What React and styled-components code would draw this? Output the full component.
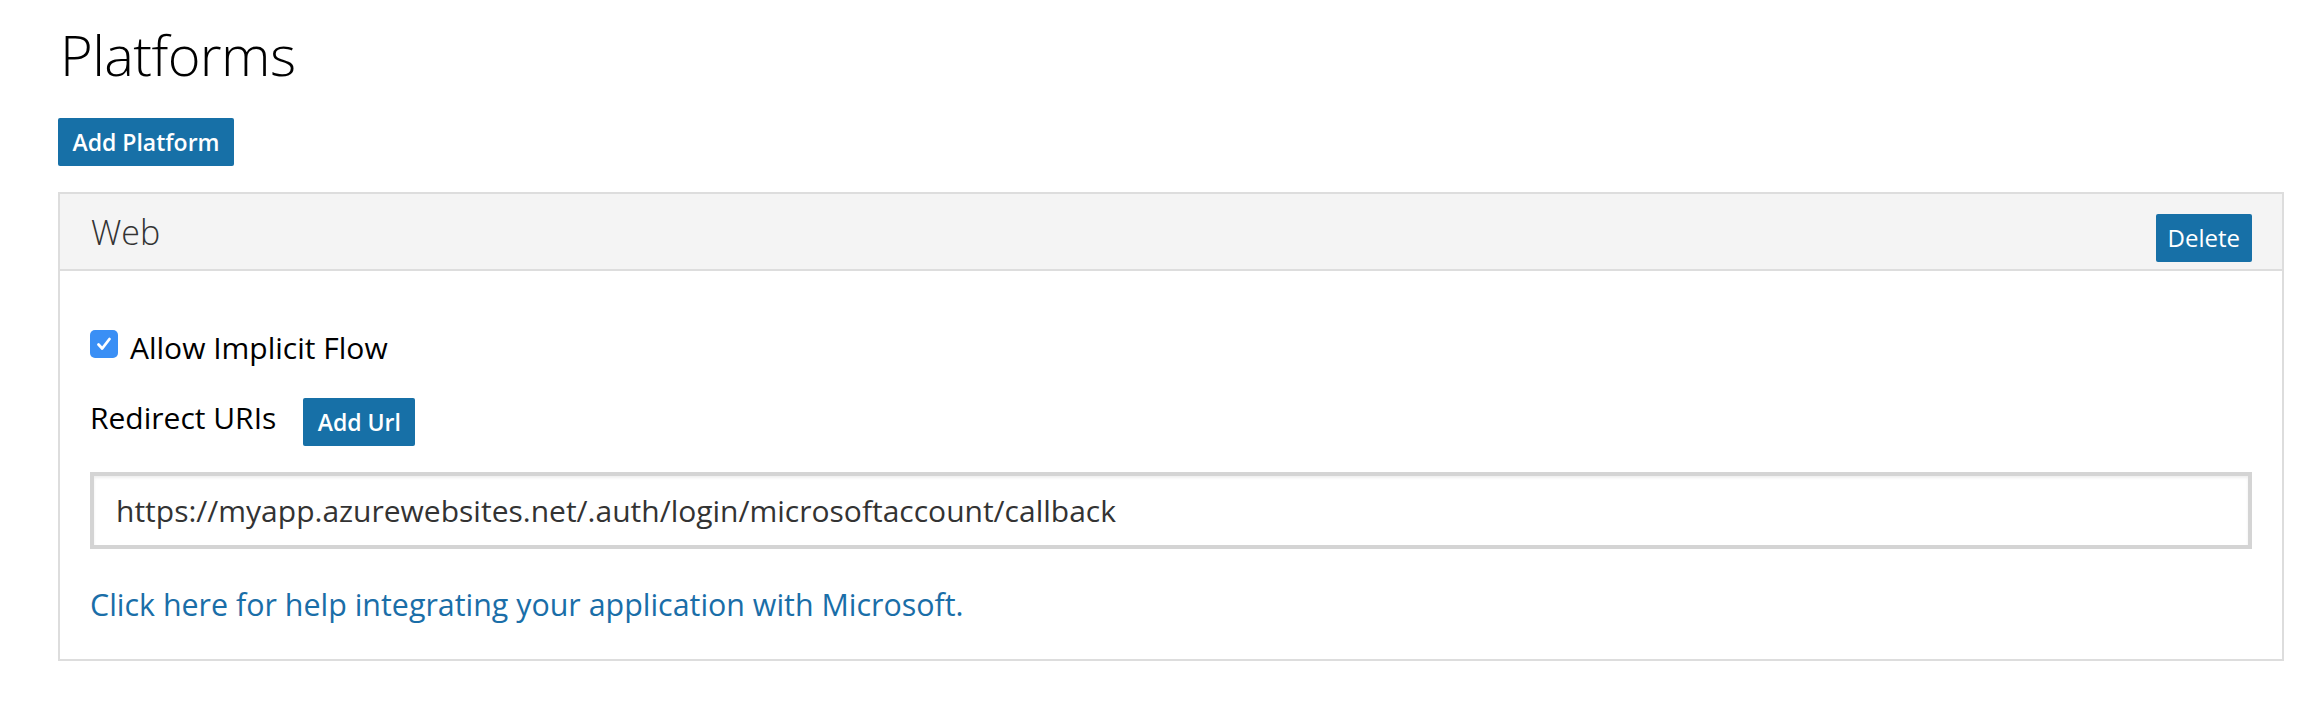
import React from "react";
import styled, { createGlobalStyle } from "styled-components";

const Global = createGlobalStyle`
  html, body { margin: 0; padding: 0; background: #fff; }
  body { font-family: "Open Sans", "Noto Sans", sans-serif; color: #000; }
  * { box-sizing: border-box; }
`;

const Page = styled.div`
  display: flex;
  flex-direction: column;
  align-items: flex-start;
  padding: 22px 36px 40px 58px;
`;

const Title = styled.h1`
  margin: 0 0 0 2px;
  font-size: 56px;
  line-height: 64px;
  font-weight: 300;
  color: #000;
  letter-spacing: -0.6px;
`;

const Button = styled.button`
  display: inline-flex;
  align-items: center;
  justify-content: center;
  height: 48px;
  min-width: ${(p) => p.$min || 0}px;
  padding: 0 12px;
  border: none;
  border-radius: 2px;
  background: #1770a7;
  color: #fff;
  font-family: "Open Sans", sans-serif;
  font-size: 23px;
  line-height: 48px;
  font-weight: ${(p) => (p.$regular ? 400 : 600)};
  white-space: nowrap;
  cursor: pointer;
  flex: none;
`;

const AddPlatform = styled(Button)`
  margin-top: 32px;
`;

const Card = styled.section`
  align-self: stretch;
  margin-top: 26px;
  border: 2px solid #dddddd;
  background: #fff;
`;

const CardHeader = styled.header`
  display: flex;
  justify-content: space-between;
  align-items: flex-start;
  height: 77px;
  padding: 0 30px 0 31px;
  background: #f4f4f4;
  border-bottom: 2px solid #dddddd;
`;

const CardTitle = styled.h2`
  margin: 0;
  font-size: 34px;
  line-height: 77px;
  font-weight: 300;
  color: #333;
`;

const DeleteButton = styled(Button)`
  margin-top: 20px;
  font-size: 24px;
`;

const CardBody = styled.div`
  display: flex;
  flex-direction: column;
  padding: 57px 30px 34px 30px;
`;

const Row = styled.div`
  display: flex;
  align-items: flex-start;
  gap: ${(p) => p.$gap || 12}px;
  margin-top: ${(p) => p.$top || 0}px;
`;

const Check = styled.span`
  display: inline-flex;
  align-items: center;
  justify-content: center;
  width: 28px;
  height: 28px;
  margin-top: 2px;
  border-radius: 5px;
  background: #3a8ff5;
  flex: none;
`;

const Label = styled.span`
  font-size: 30px;
  line-height: 40px;
  color: #000;
`;

const UrlInput = styled.input`
  margin-top: 26px;
  height: 77px;
  width: 100%;
  padding: 0 22px;
  border: 4px solid #d4d4d4;
  border-radius: 0;
  box-shadow: inset 0 2px 3px rgba(0, 0, 0, 0.07);
  font-family: "Open Sans", sans-serif;
  font-size: 30px;
  color: #333;
  outline: none;
  background: #fff;
`;

const HelpLink = styled.a`
  margin-top: 36px;
  font-size: 30.4px;
  line-height: 40px;
  color: #1a6ea8;
  text-decoration: none;
  align-self: flex-start;
`;

export default function App() {
  return (
    <>
      <Global />
      <Page>
        <Title>Platforms</Title>
        <AddPlatform $min={176}>Add Platform</AddPlatform>
        <Card>
          <CardHeader>
            <CardTitle>Web</CardTitle>
            <DeleteButton $regular $min={94}>Delete</DeleteButton>
          </CardHeader>
          <CardBody>
            <Row>
              <Check>
                <svg width="20" height="20" viewBox="0 0 20 20">
                  <path d="M4.5 10.5 L8.2 14.5 L15.5 5" fill="none" stroke="#fff" strokeWidth="2.8" strokeLinecap="round" strokeLinejoin="round" />
                </svg>
              </Check>
              <Label>Allow Implicit Flow</Label>
            </Row>
            <Row $top={30} $gap={27}>
              <Label>Redirect URIs</Label>
              <Button $min={112}>Add Url</Button>
            </Row>
            <UrlInput readOnly value="https://myapp.azurewebsites.net/.auth/login/microsoftaccount/callback" />
            <HelpLink href="#">Click here for help integrating your application with Microsoft.</HelpLink>
          </CardBody>
        </Card>
      </Page>
    </>
  );
}
